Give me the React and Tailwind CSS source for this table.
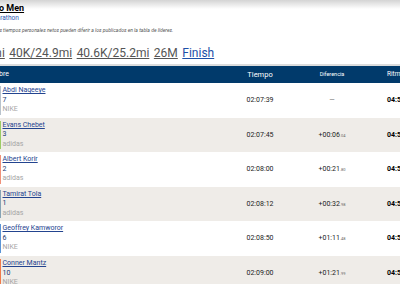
import React from "react";

const rows = [
  { name: "Abdi Nageeye", num: "7", brand: "NIKE", time: "02:07:39", diff: null, dec: "", pace: "04:52", bar: "border-[#b9c3cc]", bg: "bg-white" },
  { name: "Evans Chebet", num: "3", brand: "adidas", time: "02:07:45", diff: "+00:06", dec: ".04", pace: "04:52", bar: "border-[#9ccc65]", bg: "bg-[#efece8]" },
  { name: "Albert Korir", num: "2", brand: "adidas", time: "02:08:00", diff: "+00:21", dec: ".80", pace: "04:53", bar: "border-[#f0927a]", bg: "bg-white" },
  { name: "Tamirat Tola", num: "1", brand: "adidas", time: "02:08:12", diff: "+00:32", dec: ".98", pace: "04:53", bar: "border-[#86a3b5]", bg: "bg-[#efece8]" },
  { name: "Geoffrey Kamworor", num: "6", brand: "NIKE", time: "02:08:50", diff: "+01:11", dec: ".48", pace: "04:54", bar: "border-[#5b95d6]", bg: "bg-white" },
  { name: "Conner Mantz", num: "10", brand: "NIKE", time: "02:09:00", diff: "+01:21", dec: ".99", pace: "04:55", bar: "border-[#f07a4a]", bg: "bg-[#efece8]" },
];

export default function App() {
  return (
    <div className="w-[400px] h-[284px] overflow-hidden bg-[linear-gradient(to_bottom,#d4d4d4,#ffffff_9px)] font-['Roboto',sans-serif]">
      <div className="pt-[3px]">
        <div className="-ml-[10px] text-[9px] leading-[11px] font-bold text-black underline">Pro Men</div>
        <div className="-ml-[9px] text-[6.5px] leading-[9px] text-[#2a55b0]">Marathon</div>
        <div className="-ml-[6px] mt-[3px] text-[5px] leading-[8px] italic text-[#555]">
          Los tiempos personales netos pueden diferir a los publicados en la tabla de líderes.
        </div>
        <div className="-ml-[58px] mt-[11px] flex gap-[4.5px] text-[12px] leading-[17px] text-[#555]">
          <span className="underline">35K/21.7mi</span>
          <span className="underline">40K/24.9mi</span>
          <span className="underline">40.6K/25.2mi</span>
          <span className="underline">26M</span>
          <span className="underline text-[#1d4fa8]">Finish</span>
        </div>
      </div>
      <div className="mt-[2px] border-t-2 border-[#dcdcdc]">
        <div className="grid grid-cols-[234px_52px_92px_1fr] h-[17px] items-center bg-[#013a6b] text-white">
          <div className="-ml-[16px] text-[7px]">Nombre</div>
          <div className="text-center text-[7.5px]">Tiempo</div>
          <div className="text-center text-[5.5px]">Diferencia</div>
          <div className="pl-[9px] text-[6.5px]">Ritmo</div>
        </div>
        {rows.map((r) => (
          <div key={r.name} className={`grid grid-cols-[234px_52px_92px_1fr] h-[34.6px] items-center ${r.bg}`}>
            <div>
              <div className={`border-l ${r.bar} pl-[1.5px] text-[7px] leading-[9.5px]`}>
                <div className="text-[#23448f] underline">{r.name}</div>
                <div className="text-[#1c3b73]">{r.num}</div>
                <div className="text-[#a5a5a5]">{r.brand}</div>
              </div>
            </div>
            <div className="text-center text-[7px] text-[#222]">{r.time}</div>
            <div className="text-center text-[7px] text-[#222]">
              {r.diff ? (
                <>
                  {r.diff}
                  <span className="text-[4px] text-[#666]">{r.dec}</span>
                </>
              ) : (
                <span className="text-[#777]">—</span>
              )}
            </div>
            <div className="pl-[9px] text-[7px] font-bold text-black">{r.pace}</div>
          </div>
        ))}
      </div>
    </div>
  );
}
